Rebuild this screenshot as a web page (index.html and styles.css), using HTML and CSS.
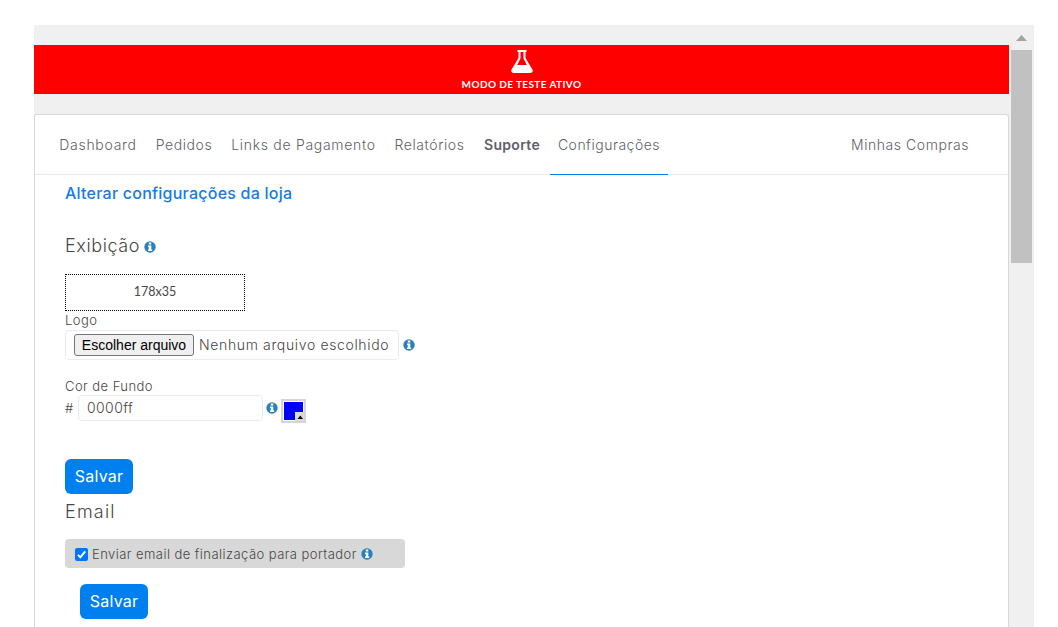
FILE: index.html
```html
<!DOCTYPE html>
<html lang="pt-BR">
<head>
<meta charset="utf-8">
<title>Configurações da loja</title>
<link rel="stylesheet" href="styles.css">
</head>
<body>
<svg class="defs" width="0" height="0">
  <symbol id="info" viewBox="0 0 12 12">
    <circle cx="6" cy="6" r="5.700" fill="#2a80b9"/>
    <path d="M4.800 1.600h2.500v2H4.800zM4 4.500h3.300v4h.9v1.600H4V8.500h.8V6H4z" fill="#fff"/>
  </symbol>
</svg>
<div class="viewport">
  <main class="page">
    <div class="banner">
      <svg class="flask" viewBox="0 0 22 23">
        <path d="M6.500 0h9v2H14.500v6l6.800 11.300c1.200 2-.1 3.700-2 3.700H2.700c-1.900 0-3.200-1.700-2-3.700L7.500 8V2h-1zM9.500 2v6.600L6.200 15h9.600L12.500 8.600V2z" fill="#fff" fill-rule="evenodd"/>
      </svg>
      <span class="banner-text">MODO DE TESTE ATIVO</span>
    </div>
    <section class="card">
      <nav class="nav">
        <a class="nav-item dashboard"><span>Dashboard</span></a>
        <a class="nav-item pedidos"><span>Pedidos</span></a>
        <a class="nav-item links"><span>Links de Pagamento</span></a>
        <a class="nav-item relatorios"><span>Relatórios</span></a>
        <a class="nav-item suporte"><span>Suporte</span></a>
        <a class="nav-item config"><span>Configurações</span></a>
        <a class="nav-item compras"><span>Minhas Compras</span></a>
      </nav>
      <div class="content">
        <h1 class="title">Alterar configurações da loja</h1>
        <h2 class="heading display"><span>Exibição</span><svg class="info"><use href="#info"/></svg></h2>
        <div class="logo-preview">178x35</div>
        <label class="label logo-label">Logo</label>
        <div class="row file-row">
          <div class="file-field"><button class="file-button">Escolher arquivo</button><span class="file-name">Nenhum arquivo escolhido</span></div>
          <svg class="info"><use href="#info"/></svg>
        </div>
        <label class="label color-label">Cor de Fundo</label>
        <div class="row color-row">
          <span class="hash">#</span>
          <div class="color-field">0000ff</div>
          <svg class="info"><use href="#info"/></svg>
          <div class="swatch"><svg viewBox="0 0 25 24" width="25" height="24">
            <path d="M0 0h25v24H0z" fill="#d5d5d5"/><path d="M2 2h21v20H2z" fill="#fff"/>
            <path d="M3 3h19v18H3z" fill="#00f"/><path d="M14 13h9v9h-9z" fill="#d9d9d9"/>
            <path d="M16.500 20 19.300 16.500 22 20z" fill="#000"/></svg></div>
        </div>
        <button class="save">Salvar</button>
        <h2 class="heading email">Email</h2>
        <div class="check-row">
          <svg class="check" viewBox="0 0 13 13"><rect width="13" height="13" rx="2" fill="#0075ff"/><path d="m3 6.900 2.300 2.400L10.200 3.400" fill="none" stroke="#fff" stroke-width="2"/></svg>
          <span class="check-text">Enviar email de finalização para portador</span>
          <svg class="info"><use href="#info"/></svg>
        </div>
        <button class="save indented">Salvar</button>
      </div>
    </section>
  </main>
  <aside class="scrollbar">
    <svg class="arrow" viewBox="0 0 11 6"><path d="M0 6 5.500 0 11 6z" fill="#a3a3a3"/></svg>
    <div class="thumb"></div>
  </aside>
</div>
</body>
</html>
```
FILE: styles.css
```css
* { box-sizing: border-box; }
body { margin: 0; padding: 25px 24px 0 34px; height: 627px; overflow: hidden; background: #fff; color: #464646; font: 300 13px/20px Inter, sans-serif; }
.defs { display: none; }
.viewport { display: flex; height: 602px; background: #f0f0f0; }
.page { width: 975px; padding-top: 20px; }
.banner { height: 49px; background: #f00; display: flex; flex-direction: column; align-items: center; padding-top: 5px; }
.flask { width: 22px; height: 23px; }
.banner-text { color: #fff; font: 700 10px/14px Lato, sans-serif; letter-spacing: .4px; margin-top: 4px; white-space: nowrap; }
.card { margin-top: 20px; height: 513px; border: 1px solid #d8d8d8; border-bottom: 0; border-radius: 3px 3px 0 0; background: #fff; }
.nav { display: flex; height: 60px; padding-left: 15px; border-bottom: 1px solid #e9ebf2; color: #5f5f68; font-size: 14px; }
.nav-item { height: 60px; display: flex; justify-content: center; padding-top: 20px; white-space: nowrap; }
.dashboard { width: 96px; letter-spacing: .7px; }
.pedidos { width: 76px; letter-spacing: .6px; }
.links { width: 163px; letter-spacing: .7px; }
.relatorios { width: 89px; letter-spacing: .6px; }
.suporte { width: 76px; font-weight: 600; letter-spacing: .3px; }
.config { width: 118px; letter-spacing: .5px; border-bottom: 1px solid #0080ec; }
.compras { margin-left: auto; margin-right: 39px; letter-spacing: .55px; }
.content { padding: 8px 0 0 30px; display: flex; flex-direction: column; align-items: flex-start; }
.title { margin: 0; font-size: 16px; line-height: 20px; font-weight: 500; letter-spacing: .23px; color: #147be8; white-space: nowrap; }
.heading { margin: 0; font-size: 18px; line-height: 24px; font-weight: 300; letter-spacing: .6px; }
.display { display: flex; align-items: center; gap: 4px; margin-top: 31px; }
.info { width: 12px; height: 12px; flex: none; }
.display .info { margin-top: 2px; }
.logo-preview { width: 180px; height: 37px; margin-top: 16px; border: 1px dotted #000; text-align: center; font: 400 12.500px/33px Lato, sans-serif; }
.label { line-height: 18px; letter-spacing: .45px; }
.row { display: flex; align-items: center; }
.file-row { gap: 4px; height: 30px; margin-top: 1px; }
.file-field { display: flex; align-items: center; width: 334px; height: 30px; padding-left: 8px; border: 1px solid #e9ebf2; border-radius: 4px; }
.file-button { width: 120px; height: 22px; padding: 0; border: 1px solid #767676; border-radius: 3px; background: #efefef; color: #000; font: 14px/18px "Liberation Sans", sans-serif; white-space: nowrap; }
.file-name { margin-left: 5px; font-size: 14px; letter-spacing: .64px; white-space: nowrap; }
.color-label { margin-top: 17px; }
.color-row { height: 26px; }
.hash { width: 13px; }
.color-field { width: 185px; height: 26px; padding-left: 8px; border: 1px solid #e9ebf2; border-radius: 4px; font-size: 14px; line-height: 24px; letter-spacing: .4px; }
.color-row .info { margin-left: 3px; }
.swatch { width: 25px; height: 24px; margin: 5px 0 0 3px; }
.swatch svg { display: block; }
.save { width: 68px; height: 35px; margin-top: 38px; padding: 0; border: 0; border-radius: 6px; background: #0080ef; color: #fff; font: 400 16px/35px Inter, sans-serif; letter-spacing: .2px; }
.email { margin-top: 6px; letter-spacing: 1.200px; }
.check-row { display: flex; align-items: center; width: 340px; height: 29px; margin-top: 15px; padding-left: 10px; border-radius: 4px; background: #d8d8d8; }
.check { width: 13px; height: 13px; margin: 2px 4px 0 0; }
.check-text { letter-spacing: .45px; margin-right: 4px; white-space: nowrap; }
.indented { margin: 16px 0 0 15px; }
.scrollbar { width: 25px; padding: 10px 0 0 2px; }
.arrow { display: block; width: 11px; height: 6px; margin-left: 5px; }
.thumb { width: 21px; height: 213px; margin-top: 9px; background: #c1c1c1; }
```
